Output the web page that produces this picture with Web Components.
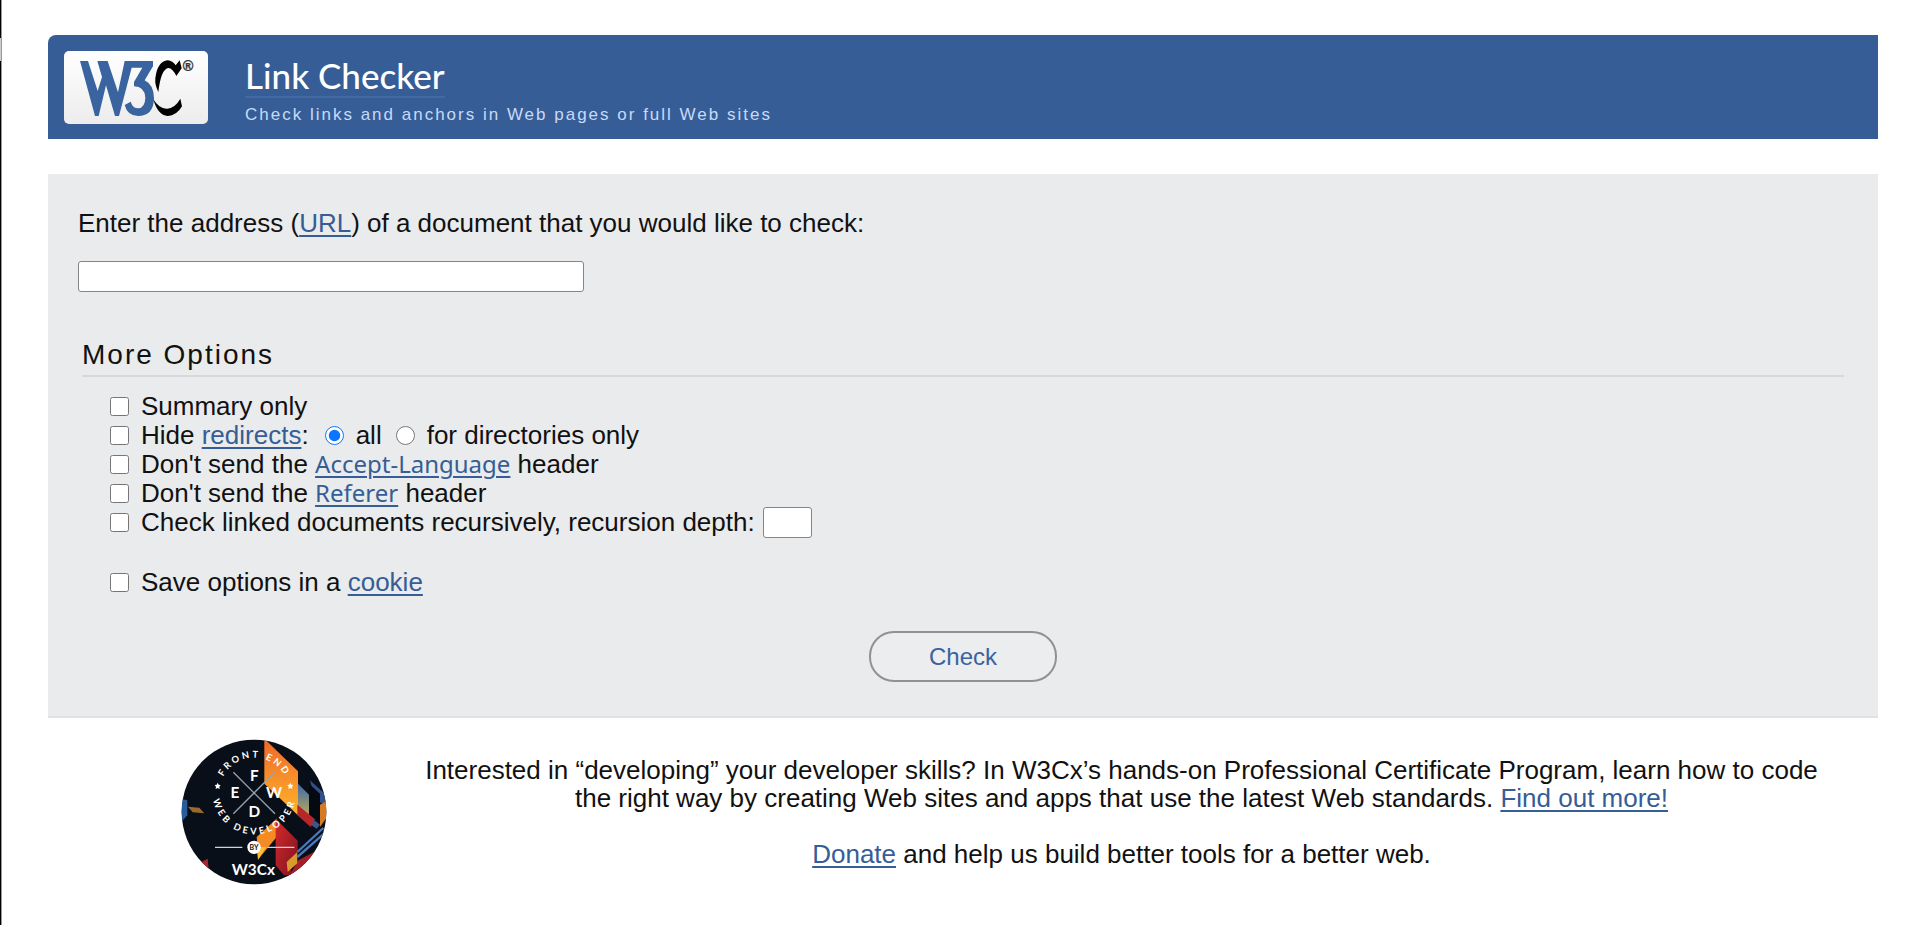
<!DOCTYPE html>
<html lang="en">
<head>
<meta charset="utf-8">
<title>W3C Link Checker</title>
<style>
  body { margin: 0; background: #fff; color: #111; font: 26px/29px "Liberation Sans", Arial, sans-serif; --link: #365d95; }
</style>
</head>
<body>
<checker-page>
  <checker-banner slot="banner"></checker-banner>
  <checker-form slot="form"></checker-form>
  <checker-promo slot="promo"></checker-promo>
</checker-page>

<script>
const LINK = `a { color: var(--link); text-decoration: underline; text-decoration-thickness: 2px; text-underline-offset: 3px; }`;

function define(name, html) {
  const template = document.createElement('template');
  template.innerHTML = html;
  customElements.define(name, class extends HTMLElement {
    constructor() {
      super();
      this.attachShadow({ mode: 'open' }).append(template.content.cloneNode(true));
    }
  });
}

/* W3C mark on its light plate */
define('w3c-logo', `
<style>
  :host { display: block; width: 144px; height: 73px; border-radius: 5px; background: linear-gradient(#fff, #ececec); }
  svg { display: block; width: 100%; height: 100%; }
</style>
<svg viewBox="12 18 432 219" role="img" aria-label="W3C">
  <path fill="#3a649f" d="M60 48H84L113 138 126 96 112 48H143L174 142 194 48H279V64L254 106Q282 120 282 160 281 213 234 213 202 212 194 180L212 170Q218 190 235 190 255 188 256 158 254 125 222 124V111L247 68H215L177 213H165L138 121 116 213H105Z"/>
  <path fill="#000" d="M359 46 365 70 349 93Q338 70 325 69 303 72 295 141 284 120 286 100 292 49 323 46 338 47 347 61Z"/>
  <path fill="#000" d="M280 163Q298 193 322 191 346 188 361 161L366 184Q350 212 323 213 293 211 280 163Z"/>
  <text x="368" y="79" font-size="43" font-weight="bold" fill="#333" stroke="#333" font-family="Liberation Sans, sans-serif">®</text>
</svg>`);

define('checker-banner', `
<style>
  :host { display: flex; align-items: flex-start; background: #365d95; border-radius: 8px 0 0 0; padding: 16px 16px 15px; gap: 37px; }
  h1 { margin: 0; display: table; font: 500 35px/38px Lato, "Open Sans", sans-serif; border-bottom: 2px solid #4269a2; padding-bottom: 2px; }
  h1 a { color: #fff; text-decoration: none; }
  .text { padding-top: 5px; }
  p { margin: 8px 0 0; color: #c6dafa; font-size: 17px; line-height: 18px; letter-spacing: 2px; }
</style>
<w3c-logo></w3c-logo>
<div class="text">
  <h1><a href="#">Link Checker</a></h1>
  <p>Check links and anchors in Web pages or full Web sites</p>
</div>`);

/* One option line: a tick box with its label, and controls that follow it */
define('option-row', `
<style>
  :host { display: flex; align-items: center; height: 29px; gap: 8px; }
  label { display: flex; align-items: center; gap: 12px; white-space: nowrap; }
  input { margin: 0; width: 19px; height: 19px; flex: none; }
</style>
<label><input type="checkbox"><span><slot></slot></span></label>
<slot name="after"></slot>`);

define('redirect-scope', `
<style>
  :host { display: flex; gap: 14px; margin-left: 8px; }
  label { display: flex; align-items: center; gap: 12px; }
  input { margin: 0; width: 19px; height: 19px; accent-color: #0a75ff; }
</style>
<label><input type="radio" name="scope" checked>all</label>
<label><input type="radio" name="scope">for directories only</label>`);

define('checker-form', `
<style>
  :host { display: block; background: #e9ebec; border-bottom: 2px solid #e0e2e4; padding: 35px 30px 34px; }
  ${LINK}
  form { display: flex; flex-direction: column; align-items: flex-start; }
  .field { box-sizing: border-box; height: 31px; padding: 0 4px; margin: 0; border: 1px solid #858585; border-radius: 3px; background: #fff; font: inherit; }
  .uri { width: 506px; margin-top: 23px; }
  .depth { width: 49px; }
  fieldset { align-self: stretch; border: 0; margin: 47px 4px 0; padding: 0; min-width: 0; }
  legend { box-sizing: border-box; width: 100%; padding: 0 0 4px; margin-bottom: 15px; font-size: 28px; line-height: 32px; letter-spacing: 2px; border-bottom: 2px solid #d6d8da; }
  .rows { padding-left: 28px; }
  .save { margin-top: 31px; }
  code { font: 24px/28px "Noto Sans", sans-serif; }
  button { align-self: center; width: 188px; height: 51px; margin-top: 34px; border: 2px solid #919191; border-radius: 25px; background: #ebedee; color: #3a629f; font: 24px/28px "Liberation Sans", Arial, sans-serif; padding: 0; }
</style>
<form>
  <label for="uri">Enter the address (<a href="#">URL</a>) of a document that you would like to check:</label>
  <input class="field uri" id="uri" type="text">
  <fieldset>
    <legend>More Options</legend>
    <div class="rows">
      <option-row>Summary only</option-row>
      <option-row>Hide <a href="#">redirects</a>:<redirect-scope slot="after"></redirect-scope></option-row>
      <option-row>Don't send the <a href="#"><code>Accept-Language</code></a> header</option-row>
      <option-row>Don't send the <a href="#"><code>Referer</code></a> header</option-row>
      <option-row>Check linked documents recursively, <label for="depth">recursion depth:</label><input slot="after" class="field depth" id="depth" type="text" aria-label="recursion depth"></option-row>
      <option-row class="save">Save options in a <a href="#">cookie</a></option-row>
    </div>
  </fieldset>
  <button type="button">Check</button>
</form>`);

/* Round Front-End Web Developer badge */
define('fewd-badge', `
<style>
  :host { display: block; width: 146px; height: 146px; flex: none; }
  svg { display: block; width: 100%; height: 100%; }
</style>
<svg viewBox="63 61 438 438" role="img" aria-label="Front-End Web Developer by W3Cx">
  <defs>
    <clipPath id="disc"><circle cx="282" cy="280" r="217"/></clipPath>
    <linearGradient id="flame" x1="0" y1="0" x2="0" y2="1"><stop offset="0" stop-color="#f0682a"/><stop offset="1" stop-color="#fdb52c"/></linearGradient>
    <linearGradient id="steel" x1="0" y1="0" x2="0" y2="1"><stop offset="0" stop-color="#3f68a8"/><stop offset="1" stop-color="#b9a95a"/></linearGradient>
    <linearGradient id="ruby" x1="0" y1="0" x2="1" y2="1"><stop offset="0" stop-color="#d62a2c"/><stop offset="1" stop-color="#7d1220"/></linearGradient>
    <path id="top" d="M178 222A105 105 0 0 1 388 222"/>
    <path id="bottom" d="M158 222A125 125 0 0 0 408 222"/>
  </defs>
  <g clip-path="url(#disc)">
    <rect x="60" y="60" width="445" height="445" fill="#080f19"/>
    <path fill="url(#flame)" d="M313 60 414 158V290L313 195Z"/>
    <path fill="url(#steel)" d="M414 195 447 228V290L414 270Z"/>
    <path fill="#324f87" d="M450 185 505 235V262L465 245Z"/>
    <path fill="#050a12" d="M447 195 480 225V310L447 285Z"/>
    <path fill="#d67a22" d="M480 258 505 244V290L480 325Z"/>
    <path fill="#b8262a" d="M412 258 465 302 452 325 412 290Z"/>
    <path fill="#40538b" d="M463 305 480 318 470 330 452 318Z"/>
    <path fill="#f68a23" d="M290 355 350 300V355L296 420Z"/>
    <path fill="#fcc13a" d="M290 385 318 385 294 424Z"/>
    <path fill="url(#ruby)" d="M347 300 413 366V400L383 432 400 470H372L347 440Z"/>
    <path fill="#a51e28" d="M415 425 462 400 440 450 385 475Z"/>
    <path fill="#d8992d" d="M380 430 412 400V434L383 460Z"/>
    <path stroke="#4a78bd" stroke-width="7" d="M412 400 490 328M412 415 492 345"/>
    <path fill="#2b5c99" d="M60 240 82 245V290L66 308Z"/>
    <path fill="#9b6a2a" d="M84 264 118 267 133 284 98 281Z"/>
    <path fill="#a82832" d="M120 432 143 420 146 450 130 442Z"/>
  </g>
  <path stroke="#9aa3ab" stroke-width="4" fill="none" d="M220 161 345 285M344 161 220 285"/>
  <path stroke="#d0d4d8" stroke-width="4" d="M165 386H247M322 386H403"/>
  <circle cx="282" cy="386" r="20" fill="#fff"/>
  <path fill="#fff" d="M173 192l3 6 6 1-4 5 1 7-6-3-6 3 1-7-4-5 6-1ZM391 192l3 6 6 1-4 5 1 7-6-3-6 3 1-7-4-5 6-1Z"/>
  <g fill="#fff" font-family="Lato, sans-serif" font-weight="bold" text-anchor="middle">
    <g font-size="46">
      <text x="283" y="186">F</text><text x="225" y="239">E</text><text x="342" y="239">W</text><text x="283" y="295">D</text>
    </g>
    <text font-size="28" letter-spacing="8"><textPath href="#top" startOffset="50%">FRONT END</textPath></text>
    <text font-size="28" letter-spacing="9"><textPath href="#bottom" startOffset="50%">WEB DEVELOPER</textPath></text>
    <text x="282" y="394" font-size="21" fill="#111">BY</text>
    <text x="280" y="468" font-size="46">W3Cx</text>
  </g>
</svg>`);

define('checker-promo', `
<style>
  :host { display: flex; align-items: center; gap: 82px; padding: 21px 44px 36px 133px; }
  ${LINK}
  .text { flex: 1; text-align: center; line-height: 28px; }
  p { margin: 0 0 28px; }
  p:last-child { margin: 0; }
</style>
<fewd-badge></fewd-badge>
<div class="text">
  <p>Interested in “developing” your developer skills? In W3Cx’s hands-on Professional Certificate Program, learn how to code the right way by creating Web sites and apps that use the latest Web standards. <a href="#">Find out more!</a></p>
  <p><a href="#">Donate</a> and help us build better tools for a better web.</p>
</div>`);

/* Window edge on the left, page column on the right */
define('checker-page', `
<style>
  :host { display: flex; min-height: 100vh; }
  .edge { width: 1px; flex: none; border-right: 1px solid #999; background: linear-gradient(#000 38px, #ccc 38px, #ccc 61px, #000 61px); }
  main { flex: 1; min-width: 0; display: flex; flex-direction: column; padding: 35px 42px 0 46px; }
  ::slotted([slot=form]) { margin-top: 35px; }
</style>
<div class="edge"></div>
<main>
  <slot name="banner"></slot>
  <slot name="form"></slot>
  <slot name="promo"></slot>
</main>`);
</script>
</body>
</html>
